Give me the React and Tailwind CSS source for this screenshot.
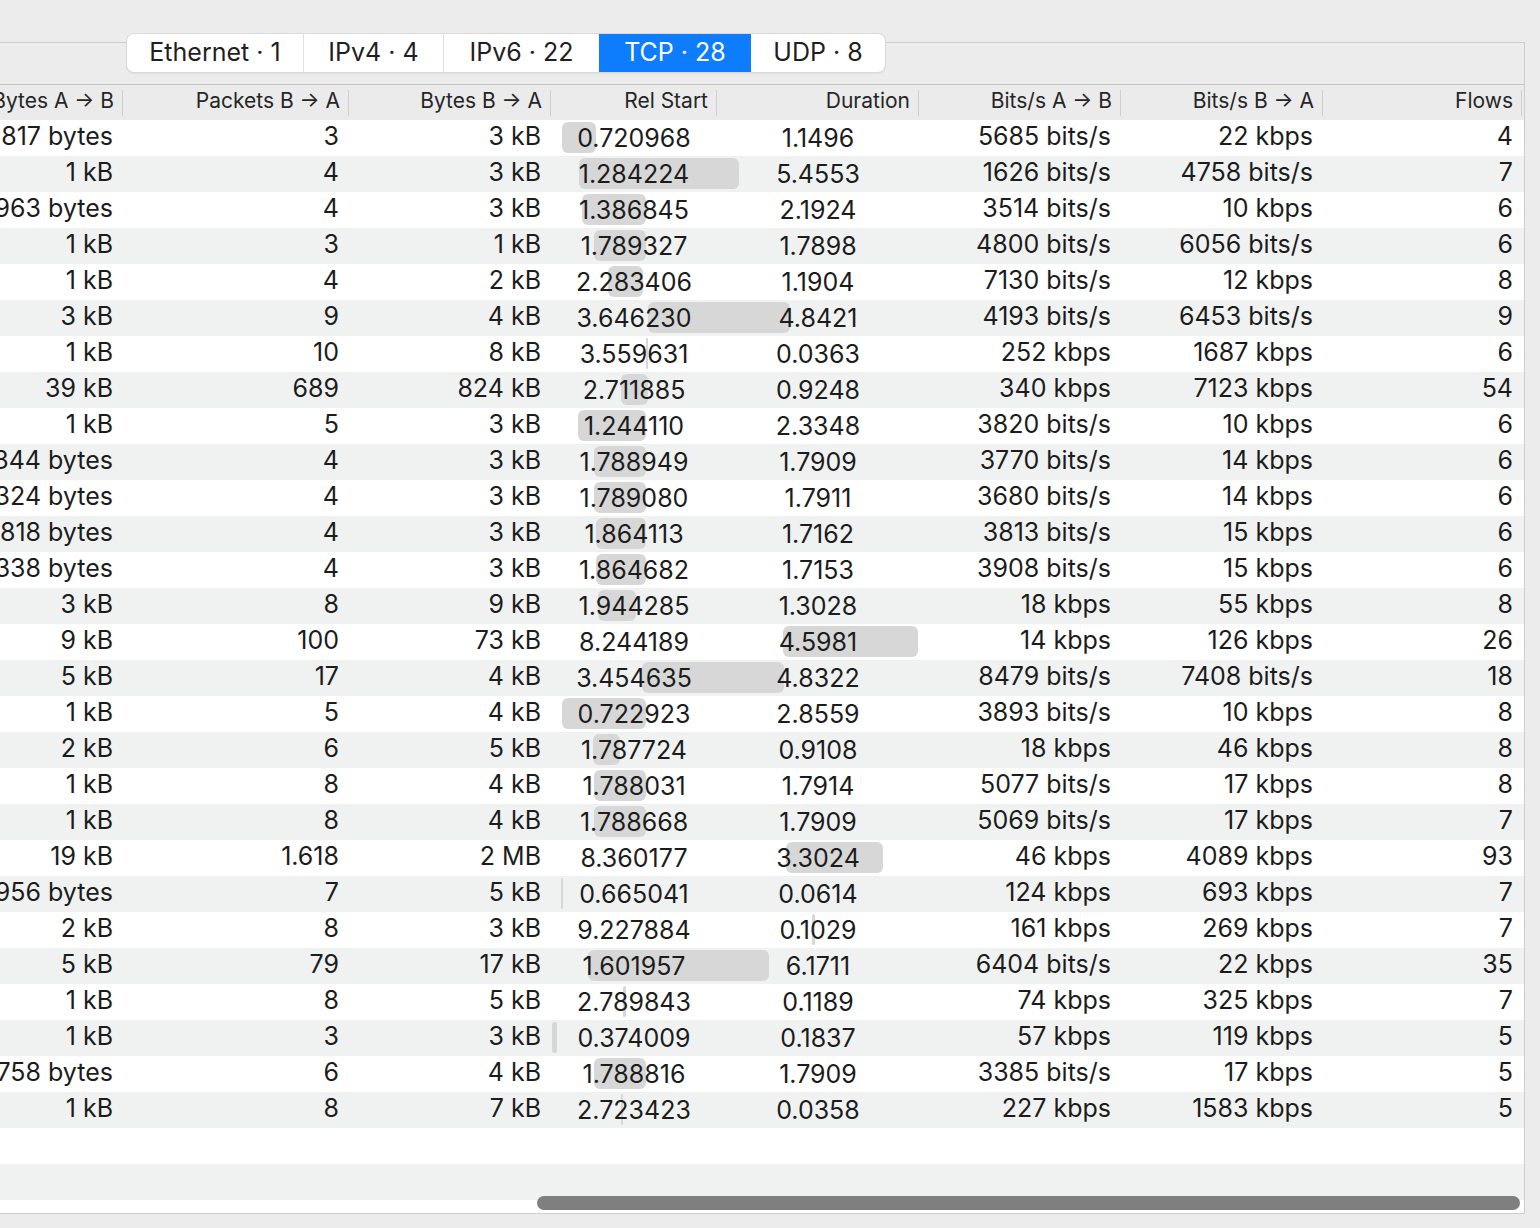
const rows = [
  ['817 bytes', '3', '3 kB', '0.720968', '1.1496', '5685 bits/s', '22 kbps', '4'],
  ['1 kB', '4', '3 kB', '1.284224', '5.4553', '1626 bits/s', '4758 bits/s', '7'],
  ['963 bytes', '4', '3 kB', '1.386845', '2.1924', '3514 bits/s', '10 kbps', '6'],
  ['1 kB', '3', '1 kB', '1.789327', '1.7898', '4800 bits/s', '6056 bits/s', '6'],
  ['1 kB', '4', '2 kB', '2.283406', '1.1904', '7130 bits/s', '12 kbps', '8'],
  ['3 kB', '9', '4 kB', '3.646230', '4.8421', '4193 bits/s', '6453 bits/s', '9'],
  ['1 kB', '10', '8 kB', '3.559631', '0.0363', '252 kbps', '1687 kbps', '6'],
  ['39 kB', '689', '824 kB', '2.711885', '0.9248', '340 kbps', '7123 kbps', '54'],
  ['1 kB', '5', '3 kB', '1.244110', '2.3348', '3820 bits/s', '10 kbps', '6'],
  ['344 bytes', '4', '3 kB', '1.788949', '1.7909', '3770 bits/s', '14 kbps', '6'],
  ['324 bytes', '4', '3 kB', '1.789080', '1.7911', '3680 bits/s', '14 kbps', '6'],
  ['818 bytes', '4', '3 kB', '1.864113', '1.7162', '3813 bits/s', '15 kbps', '6'],
  ['338 bytes', '4', '3 kB', '1.864682', '1.7153', '3908 bits/s', '15 kbps', '6'],
  ['3 kB', '8', '9 kB', '1.944285', '1.3028', '18 kbps', '55 kbps', '8'],
  ['9 kB', '100', '73 kB', '8.244189', '4.5981', '14 kbps', '126 kbps', '26'],
  ['5 kB', '17', '4 kB', '3.454635', '4.8322', '8479 bits/s', '7408 bits/s', '18'],
  ['1 kB', '5', '4 kB', '0.722923', '2.8559', '3893 bits/s', '10 kbps', '8'],
  ['2 kB', '6', '5 kB', '1.787724', '0.9108', '18 kbps', '46 kbps', '8'],
  ['1 kB', '8', '4 kB', '1.788031', '1.7914', '5077 bits/s', '17 kbps', '8'],
  ['1 kB', '8', '4 kB', '1.788668', '1.7909', '5069 bits/s', '17 kbps', '7'],
  ['19 kB', '1.618', '2 MB', '8.360177', '3.3024', '46 kbps', '4089 kbps', '93'],
  ['956 bytes', '7', '5 kB', '0.665041', '0.0614', '124 kbps', '693 kbps', '7'],
  ['2 kB', '8', '3 kB', '9.227884', '0.1029', '161 kbps', '269 kbps', '7'],
  ['5 kB', '79', '17 kB', '1.601957', '6.1711', '6404 bits/s', '22 kbps', '35'],
  ['1 kB', '8', '5 kB', '2.789843', '0.1189', '74 kbps', '325 kbps', '7'],
  ['1 kB', '3', '3 kB', '0.374009', '0.1837', '57 kbps', '119 kbps', '5'],
  ['758 bytes', '6', '4 kB', '1.788816', '1.7909', '3385 bits/s', '17 kbps', '5'],
  ['1 kB', '8', '7 kB', '2.723423', '0.0358', '227 kbps', '1583 kbps', '5'],
]

const tabs = [
  { label: 'Ethernet · 1', w: 'w-[176px]' },
  { label: 'IPv4 · 4', w: 'w-[140px]' },
  { label: 'IPv6 · 22', w: 'w-[156px]' },
  { label: 'TCP · 28', w: 'w-[152px]', active: true },
  { label: 'UDP · 8', w: 'w-[134px]' },
]

const minStart = Math.min(...rows.map((r) => parseFloat(r[3])))
const maxEnd = Math.max(...rows.map((r) => parseFloat(r[3]) + parseFloat(r[4])))
const span = maxEnd - minStart
const TIMELINE_W = 366

function HeaderCell({ label, w }) {
  return (
    <div className={`${w} flex items-center justify-end shrink-0`}>
      <span className="pr-[8px] pb-[4px]">{label}</span>
      <span className="w-px h-[26px] bg-[#cfcfcf]" />
    </div>
  )
}

function Cell({ value, w }) {
  return (
    <div className={`${w} shrink-0 flex items-center justify-end pr-[10px] pb-[3px] whitespace-nowrap`}>
      {value}
    </div>
  )
}

function Timeline({ start, dur }) {
  const s = parseFloat(start)
  const d = parseFloat(dur)
  const left = 1 + ((s - minStart) / span) * TIMELINE_W
  const width = Math.max(2, (d / span) * TIMELINE_W)
  return (
    <div className="relative w-[368px] shrink-0 flex">
      <div
        className="absolute top-[2px] h-[31px] rounded-[6px] bg-[#d7d7d7]"
        style={{ left, width }}
      />
      <div className="relative w-[166px] flex items-center justify-center pt-[1px]">{start}</div>
      <div className="relative w-[202px] flex items-center justify-center pt-[1px]">{dur}</div>
    </div>
  )
}

function Row({ row, index }) {
  const [bab, pba, bba, start, dur, bitab, bitba, flows] = row
  return (
    <div className={`flex h-[36px] shrink-0 ${index % 2 === 0 ? 'bg-white' : 'bg-[#f0f2f2]'}`}>
      <Cell value={bab} w="w-[203px]" />
      <Cell value={pba} w="w-[226px]" />
      <Cell value={bba} w="w-[202px]" />
      <Timeline start={start} dur={dur} />
      <Cell value={bitab} w="w-[202px]" />
      <Cell value={bitba} w="w-[202px]" />
      <Cell value={flows} w="w-[200px]" />
    </div>
  )
}

export default function App() {
  return (
    <div
      className="w-[1540px] h-[1228px] bg-[#ececec] overflow-hidden pt-[42px] text-[#1c1c1c]"
      style={{ fontFamily: 'Inter, "Noto Sans", sans-serif' }}
    >
      <div className="relative w-[1525px] h-[1172px] border-t border-r border-b border-[#cdcdcd] flex flex-col">
        <div className="flex mt-[-10px] ml-[126px] mb-[11px]">
          <div className="flex h-[40px] rounded-[8px] overflow-hidden bg-white border border-[#d9d9d9] shadow-[0_1px_1px_rgba(0,0,0,0.06)] text-[25px]">
            {tabs.map((t, i) => (
              <div
                key={t.label}
                className={`${t.w} flex items-center justify-center ${
                  t.active ? 'bg-[#0d7dfd] text-white' : 'text-[#1f1f1f]'
                } ${i > 0 && !t.active && !tabs[i - 1].active ? 'border-l border-[#dedede]' : ''}`}
              >
                {t.label}
              </div>
            ))}
          </div>
        </div>

        <div className="flex-1 flex flex-col overflow-hidden">
          <div className="border-t border-[#c4c4c4] bg-[#ebebeb] h-[36px] shrink-0 flex ml-[-80px] text-[21px] text-[#262626]">
            <HeaderCell label="Bytes A → B" w="w-[203px]" />
            <HeaderCell label="Packets B → A" w="w-[226px]" />
            <HeaderCell label="Bytes B → A" w="w-[202px]" />
            <HeaderCell label="Rel Start" w="w-[166px]" />
            <HeaderCell label="Duration" w="w-[202px]" />
            <HeaderCell label="Bits/s A → B" w="w-[202px]" />
            <HeaderCell label="Bits/s B → A" w="w-[202px]" />
            <HeaderCell label="Flows" w="w-[199px]" />
          </div>

          <div className="flex-1 flex flex-col ml-[-80px] text-[25px]">
            {rows.map((row, i) => (
              <Row key={i} row={row} index={i} />
            ))}
            <div className="h-[36px] shrink-0 bg-white" />
            <div className="h-[36px] shrink-0 bg-[#f0f2f2]" />
            <div className="flex-1 bg-white" />
          </div>
        </div>

        <div className="absolute left-[537px] bottom-[3px] w-[983px] h-[14px] rounded-full bg-[#7f7f7f]" />
      </div>
    </div>
  )
}
